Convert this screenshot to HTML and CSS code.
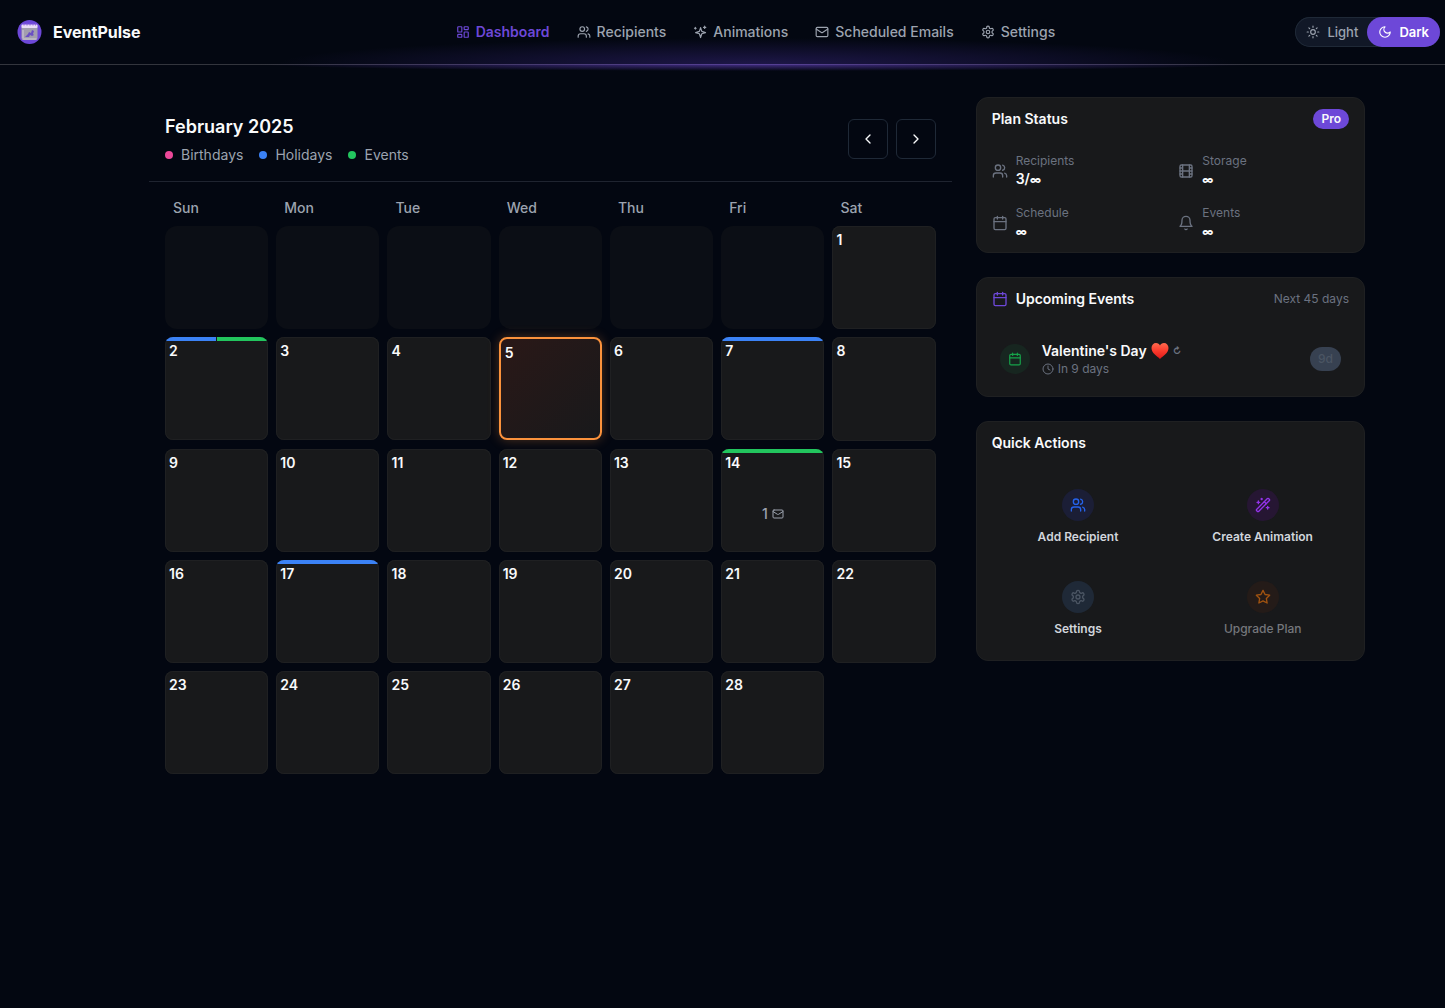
FILE: index.html
```html
<!DOCTYPE html>
<html lang="en">
<head>
<meta charset="utf-8">
<meta name="viewport" content="width=device-width, initial-scale=1">
<title>EventPulse</title>
<link rel="stylesheet" href="styles.css">
</head>
<body>
<svg class="sprite" aria-hidden="true">
  <symbol id="dashboard" viewBox="0 0 24 24"><rect width="7" height="9" x="3" y="3" rx="1"/><rect width="7" height="5" x="14" y="3" rx="1"/><rect width="7" height="9" x="14" y="12" rx="1"/><rect width="7" height="5" x="3" y="16" rx="1"/></symbol>
  <symbol id="users" viewBox="0 0 24 24"><path d="M16 21v-2a4 4 0 0 0-4-4H6a4 4 0 0 0-4 4v2"/><circle cx="9" cy="7" r="4"/><path d="M22 21v-2a4 4 0 0 0-3-3.87"/><path d="M16 3.13a4 4 0 0 1 0 7.75"/></symbol>
  <symbol id="sparkles" viewBox="0 0 24 24"><path d="M9.94 14.06 3.5 12l6.44-2.06L12 3.5l2.06 6.44L20.5 12l-6.44 2.06L12 20.5z" transform="translate(1 1)"/><path d="M20 2v4M22 4h-4M4 4v3M5.500 5.500h-3"/></symbol>
  <symbol id="mail" viewBox="0 0 24 24"><rect width="20" height="16" x="2" y="4" rx="2"/><path d="m22 7-8.97 5.7a1.94 1.94 0 0 1-2.06 0L2 7"/></symbol>
  <symbol id="settings" viewBox="0 0 24 24"><path d="M12.22 2h-.44a2 2 0 0 0-2 2v.18a2 2 0 0 1-1 1.73l-.43.25a2 2 0 0 1-2 0l-.15-.08a2 2 0 0 0-2.73.73l-.22.38a2 2 0 0 0 .73 2.73l.15.1a2 2 0 0 1 1 1.72v.51a2 2 0 0 1-1 1.74l-.15.09a2 2 0 0 0-.73 2.73l.22.38a2 2 0 0 0 2.73.73l.15-.08a2 2 0 0 1 2 0l.43.25a2 2 0 0 1 1 1.73V20a2 2 0 0 0 2 2h.44a2 2 0 0 0 2-2v-.18a2 2 0 0 1 1-1.73l.43-.25a2 2 0 0 1 2 0l.15.08a2 2 0 0 0 2.73-.73l.22-.39a2 2 0 0 0-.73-2.73l-.15-.08a2 2 0 0 1-1-1.74v-.5a2 2 0 0 1 1-1.74l.15-.09a2 2 0 0 0 .73-2.73l-.22-.38a2 2 0 0 0-2.73-.73l-.15.08a2 2 0 0 1-2 0l-.43-.25a2 2 0 0 1-1-1.73V4a2 2 0 0 0-2-2z"/><circle cx="12" cy="12" r="3"/></symbol>
  <symbol id="sun" viewBox="0 0 24 24"><circle cx="12" cy="12" r="4"/><path d="M12 2v2M12 20v2M4.930 4.930l1.410 1.410M17.660 17.660l1.410 1.410M2 12h2M20 12h2M6.340 17.660l-1.410 1.410M19.070 4.930l-1.410 1.410"/></symbol>
  <symbol id="moon" viewBox="0 0 24 24"><path d="M12 3a6 6 0 0 0 9 9 9 9 0 1 1-9-9Z"/></symbol>
  <symbol id="left" viewBox="0 0 24 24"><path d="m15 18-6-6 6-6"/></symbol>
  <symbol id="right" viewBox="0 0 24 24"><path d="m9 18 6-6-6-6"/></symbol>
  <symbol id="film" viewBox="0 0 24 24"><rect width="18" height="18" x="3" y="3" rx="2"/><path d="M7 3v18M3 7.500h4M3 12h18M3 16.500h4M17 3v18M17 7.500h4M17 16.500h4"/></symbol>
  <symbol id="calendar" viewBox="0 0 24 24"><path d="M8 2v4M16 2v4"/><rect width="18" height="18" x="3" y="4" rx="2"/><path d="M3 10h18"/></symbol>
  <symbol id="bell" viewBox="0 0 24 24"><path d="M6 8a6 6 0 0 1 12 0c0 7 3 9 3 9H3s3-2 3-9"/><path d="M10.300 21a1.940 1.940 0 0 0 3.400 0"/></symbol>
  <symbol id="clock" viewBox="0 0 24 24"><circle cx="12" cy="12" r="10"/><path d="M12 6v6l4 2"/></symbol>
  <symbol id="wand" viewBox="0 0 24 24"><path d="m21.640 3.640-1.280-1.280a1.210 1.210 0 0 0-1.720 0L2.360 18.640a1.210 1.210 0 0 0 0 1.720l1.280 1.280a1.200 1.200 0 0 0 1.720 0L21.640 5.360a1.200 1.200 0 0 0 0-1.720"/><path d="m14 7 3 3M5 6v4M19 14v4M10 2v2M7 8H3M21 16h-4M11 3H9"/></symbol>
  <symbol id="star" viewBox="0 0 24 24"><path d="m12 2 3.090 6.260L22 9.270l-5 4.870 1.180 6.880L12 17.770l-6.180 3.250L7 14.140 2 9.270l6.910-1.010z"/></symbol>
</svg>

<header class="topbar">
  <a class="brand" href="#">
    <svg class="logo" viewBox="0 0 26 26" aria-hidden="true">
      <circle cx="13.500" cy="13" r="12" fill="#6d48d8"/>
      <rect x="5.500" y="6" width="16" height="15" rx="2" fill="#a29eae"/>
      <rect x="5.500" y="5.500" width="16" height="3.500" rx="1" fill="#e9dcf6"/>
      <path d="M8 4.500v2M11 4.500v2M14 4.500v2M17 4.500v2M19.500 4.500v2" stroke="#8f62dc"/>
      <path d="M9 18l3-3 1-2 2 1 1-3 2 1-1 3 1 1-2 1-2-1-1 2z" fill="#6a4fc4"/>
      <path d="M6.500 20h14M7 11v8" stroke="#d0cbda"/>
    </svg>
    <span>EventPulse</span>
  </a>
  <nav class="nav" aria-label="Main">
    <a class="nav-link active" href="#" aria-current="page"><svg class="icon s14"><use href="#dashboard"/></svg>Dashboard</a>
    <a class="nav-link" href="#"><svg class="icon s14"><use href="#users"/></svg>Recipients</a>
    <a class="nav-link" href="#"><svg class="icon s14"><use href="#sparkles"/></svg>Animations</a>
    <a class="nav-link" href="#"><svg class="icon s14"><use href="#mail"/></svg>Scheduled Emails</a>
    <a class="nav-link" href="#"><svg class="icon s14"><use href="#settings"/></svg>Settings</a>
  </nav>
  <div class="theme" role="group" aria-label="Theme">
    <button class="theme-btn" type="button"><svg class="icon s14"><use href="#sun"/></svg>Light</button>
    <button class="theme-btn on" type="button" aria-pressed="true"><svg class="icon s14"><use href="#moon"/></svg>Dark</button>
  </div>
</header>

<main class="page">
  <section class="calendar" aria-label="Calendar">
    <div class="cal-head">
      <div>
        <h1>February 2025</h1>
        <ul class="legend">
          <li><span class="dot pink"></span>Birthdays</li>
          <li><span class="dot blue"></span>Holidays</li>
          <li><span class="dot green"></span>Events</li>
        </ul>
      </div>
      <div class="pager">
        <button type="button" aria-label="Previous month"><svg class="icon s16"><use href="#left"/></svg></button>
        <button type="button" aria-label="Next month"><svg class="icon s16"><use href="#right"/></svg></button>
      </div>
    </div>
    <div class="cal-body">
      <div class="week-names"><span>Sun</span><span>Mon</span><span>Tue</span><span>Wed</span><span>Thu</span><span>Fri</span><span>Sat</span></div>
      <div class="days">
        <div class="blank"></div><div class="blank"></div><div class="blank"></div><div class="blank"></div><div class="blank"></div><div class="blank"></div>
        <div class="day">1</div>
        <div class="day"><span class="marks"><i class="blue"></i><i class="green"></i></span>2</div>
        <div class="day">3</div>
        <div class="day">4</div>
        <div class="day today">5</div>
        <div class="day">6</div>
        <div class="day"><span class="marks"><i class="blue"></i></span>7</div>
        <div class="day">8</div>
        <div class="day">9</div>
        <div class="day">10</div>
        <div class="day">11</div>
        <div class="day">12</div>
        <div class="day">13</div>
        <div class="day"><span class="marks"><i class="green"></i></span>14<span class="mails">1<svg class="icon s12"><use href="#mail"/></svg></span></div>
        <div class="day">15</div>
        <div class="day">16</div>
        <div class="day"><span class="marks"><i class="blue"></i></span>17</div>
        <div class="day">18</div>
        <div class="day">19</div>
        <div class="day">20</div>
        <div class="day">21</div>
        <div class="day">22</div>
        <div class="day">23</div>
        <div class="day">24</div>
        <div class="day">25</div>
        <div class="day">26</div>
        <div class="day">27</div>
        <div class="day">28</div>
      </div>
    </div>
  </section>

  <aside class="side">
    <section class="card">
      <div class="card-head"><h2>Plan Status</h2><span class="pro">Pro</span></div>
      <dl class="stats">
        <div class="stat"><svg class="icon s16"><use href="#users"/></svg><div><dt>Recipients</dt><dd>3/<span class="inf">∞</span></dd></div></div>
        <div class="stat"><svg class="icon s16"><use href="#film"/></svg><div><dt>Storage</dt><dd><span class="inf">∞</span></dd></div></div>
        <div class="stat"><svg class="icon s16"><use href="#calendar"/></svg><div><dt>Schedule</dt><dd><span class="inf">∞</span></dd></div></div>
        <div class="stat"><svg class="icon s16"><use href="#bell"/></svg><div><dt>Events</dt><dd><span class="inf">∞</span></dd></div></div>
      </dl>
    </section>

    <section class="card">
      <div class="card-head"><h2><svg class="icon s16 violet"><use href="#calendar"/></svg>Upcoming Events</h2><span class="muted">Next 45 days</span></div>
      <div class="event">
        <span class="event-icon"><svg class="icon s14"><use href="#calendar"/></svg></span>
        <div class="event-text">
          <p class="event-name">Valentine's Day
            <svg class="heart" viewBox="0 0 18 16" role="img" aria-label="Heart"><defs><linearGradient id="hg" x1="0" y1="0" x2="0" y2="1"><stop offset="0" stop-color="#ff6a4e"/><stop offset="0.500" stop-color="#fa3a2c"/><stop offset="1" stop-color="#dd1a1a"/></linearGradient></defs><path d="M9 16C6 13 .5 10 .5 5 .5 2 2.500 0 5 0c2 0 3.400 1 4 2.600C9.600 1 11 0 13 0c2.500 0 4.500 2 4.500 5 0 5-5.500 8-8.500 11z" fill="url(#hg)"/></svg>
            <span class="repeat">↻</span></p>
          <p class="event-when"><svg class="icon s12"><use href="#clock"/></svg>In 9 days</p>
        </div>
        <span class="left">9d</span>
      </div>
    </section>

    <section class="card">
      <div class="card-head"><h2>Quick Actions</h2></div>
      <div class="actions">
        <button class="action" type="button"><span class="disc add"><svg class="icon s16"><use href="#users"/></svg></span>Add Recipient</button>
        <button class="action" type="button"><span class="disc create"><svg class="icon s16"><use href="#wand"/></svg></span>Create Animation</button>
        <button class="action" type="button"><span class="disc config"><svg class="icon s16"><use href="#settings"/></svg></span>Settings</button>
        <button class="action" type="button" disabled><span class="disc upgrade"><svg class="icon s16"><use href="#star"/></svg></span>Upgrade Plan</button>
      </div>
    </section>
  </aside>
</main>
</body>
</html>
```
FILE: styles.css
```css
* { box-sizing: border-box; margin: 0; padding: 0; }

body {
  min-height: 100vh;
  background: #030711;
  color: #f9fafb;
  font: 14px/20px Inter, "Liberation Sans", sans-serif;
}

a { color: inherit; text-decoration: none; }
button { font: inherit; color: inherit; background: none; border: 0; cursor: pointer; }
ul { list-style: none; }
.sprite { display: none; }

.icon { flex: none; fill: none; stroke: currentColor; stroke-width: 2; stroke-linecap: round; stroke-linejoin: round; }
.s12 { width: 12px; height: 12px; }
.s14 { width: 14px; height: 14px; }
.s16 { width: 16px; height: 16px; }

.pink { background: #ec4899; }
.blue { background: #3b82f6; }
.green { background: #22c55e; }
.violet { color: #6d48d8; }

/* Top bar */
.topbar {
  position: relative;
  display: grid;
  grid-template-columns: minmax(0, 8fr) auto minmax(0, 7fr);
  align-items: center;
  height: 65px;
  padding: 0 5px 0 16px;
  border-bottom: 1px solid #33353d;
  background: radial-gradient(ellipse 480px 26px at 757px 64px, rgba(76, 50, 170, .36), transparent);
}
.topbar::after {
  content: "";
  position: absolute;
  left: 257px;
  top: 64px;
  width: 1000px;
  height: 7px;
  background: radial-gradient(ellipse 50% 100% at 50% 0, rgba(112, 72, 216, .6), transparent);
}
.brand { display: flex; align-items: center; gap: 11px; font-size: 16px; font-weight: 700; }
.logo { width: 26px; height: 26px; }
.nav { display: flex; gap: 27px; }
.nav-link { display: flex; align-items: center; gap: 6px; color: #9ca3af; font-weight: 500; }
.nav-link.active { color: #6d48d8; font-weight: 600; }
.theme {
  justify-self: end;
  display: flex;
  border-radius: 16px;
  background: #111827;
  box-shadow: inset 0 0 0 1px #1f2937;
}
.theme-btn { display: flex; align-items: center; gap: 7px; height: 30px; padding: 0 11px; border-radius: 15px; font-size: 13px; font-weight: 500; color: #9ca3af; }
.theme-btn:first-child { padding-right: 9px; }
.theme-btn.on { background: #6d48d8; color: #fff; font-weight: 600; }

/* Page columns */
.page {
  display: grid;
  grid-template-columns: repeat(3, minmax(0, 1fr));
  align-items: start;
  gap: 24px;
  max-width: 1365px;
  padding: 32px 0 32px 149px;
}

/* Calendar */
.calendar { grid-column: span 2; }
.cal-head { display: flex; justify-content: space-between; align-items: center; padding: 16px; border-bottom: 1px solid #1f2430; }
h1 { margin-bottom: 4px; font-size: 18px; line-height: 28px; font-weight: 600; }
.legend { display: flex; gap: 16px; color: #9ca3af; }
.legend li { display: flex; align-items: center; gap: 8px; }
.dot { width: 8px; height: 8px; border-radius: 50%; }
.pager { display: flex; gap: 8px; }
.pager button { display: grid; place-items: center; width: 40px; height: 40px; border: 1px solid #1f2937; border-radius: 6px; }
.cal-body { padding: 16px; }
.week-names, .days { display: grid; grid-template-columns: repeat(7, minmax(0, 1fr)); gap: 8px; }
.week-names { margin-bottom: 8px; color: #9ca3af; font-weight: 500; }
.week-names span { padding-left: 8px; }
.blank { aspect-ratio: 1; border-radius: 12px; background: #0b0e15; }
.day {
  position: relative;
  aspect-ratio: 1;
  padding: 4px;
  border-radius: 8px;
  background: #18191b;
  box-shadow: inset 0 0 0 1px #1f2022;
  font-weight: 600;
  overflow: hidden;
}
.today {
  border: 2px solid #fb923c;
  background: linear-gradient(135deg, #2a1817, #18191b);
  box-shadow: 0 0 12px rgba(251, 146, 60, .3);
}
.marks { position: absolute; inset: 0 1px auto; display: flex; gap: 1px; height: 4px; }
.marks i { flex: 1; }
.mails { display: flex; justify-content: center; align-items: center; gap: 4px; margin-top: 31px; color: #9ca3af; font-weight: 500; }

/* Side cards */
.side { display: grid; gap: 24px; }
.card { padding: 11px 15px; border: 1px solid #1f2022; border-radius: 12px; background: #18191b; }
.card-head { display: flex; justify-content: space-between; align-items: center; height: 20px; margin-bottom: 24px; }
h2 { display: flex; align-items: center; gap: 8px; font-size: 14px; line-height: 20px; font-weight: 600; }
.pro { padding: 0 8px; border-radius: 10px; background: #6d48d8; font-size: 12px; font-weight: 600; }
.muted { color: #6b7280; font-size: 12px; }
.stats { display: grid; grid-template-columns: 1fr 1fr; gap: 16px; }
.stat { display: flex; align-items: center; gap: 8px; color: #6b7280; }
.stat dt { font-size: 12px; line-height: 16px; }
.stat dd { color: #f9fafb; font-weight: 600; }
.inf { font-size: 11px; line-height: 16px; font-weight: 800; }
.event { display: flex; align-items: center; gap: 12px; padding: 8px; }
.event-icon { display: grid; place-items: center; width: 30px; height: 30px; border-radius: 50%; background: #172620; color: #16a34a; }
.event-text { flex: 1; }
.event-name { display: flex; align-items: center; gap: 4px; font-weight: 600; }
.heart { width: 18px; height: 16px; }
.repeat { color: #6b7280; font-size: 9px; font-weight: 800; }
.event-when { display: flex; align-items: center; gap: 4px; color: #6b7280; font-size: 12px; line-height: 16px; }
.left { padding: 2px 8px; border-radius: 12px; background: #374151; color: #4b5563; font-size: 12px; font-weight: 500; }
.actions { display: grid; grid-template-columns: 1fr 1fr; gap: 12px; }
.action { display: flex; flex-direction: column; align-items: center; gap: 8px; padding: 12px; color: #d1d5db; font-size: 12px; line-height: 16px; font-weight: 600; }
.action:disabled { color: #75777c; font-weight: 500; cursor: default; }
.disc { display: grid; place-items: center; width: 32px; height: 32px; border-radius: 50%; }
.add { background: #1b1e36; color: #2563eb; }
.create { background: #261633; color: #9333ea; }
.config { background: #1f2937; color: #4b5563; }
.upgrade { background: #241b18; color: #a15310; }
```
